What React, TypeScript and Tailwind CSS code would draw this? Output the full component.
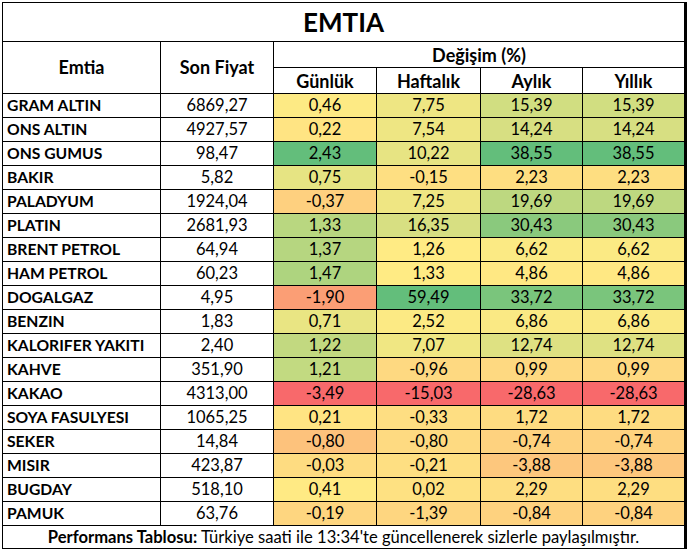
import React from "react";

type Row = { name: string; price: string; d: number[] };

const rows: Row[] = [
  { name: "GRAM ALTIN", price: "6869,27", d: [0.46, 7.75, 15.39, 15.39] },
  { name: "ONS ALTIN", price: "4927,57", d: [0.22, 7.54, 14.24, 14.24] },
  { name: "ONS GUMUS", price: "98,47", d: [2.43, 10.22, 38.55, 38.55] },
  { name: "BAKIR", price: "5,82", d: [0.75, -0.15, 2.23, 2.23] },
  { name: "PALADYUM", price: "1924,04", d: [-0.37, 7.25, 19.69, 19.69] },
  { name: "PLATIN", price: "2681,93", d: [1.33, 16.35, 30.43, 30.43] },
  { name: "BRENT PETROL", price: "64,94", d: [1.37, 1.26, 6.62, 6.62] },
  { name: "HAM PETROL", price: "60,23", d: [1.47, 1.33, 4.86, 4.86] },
  { name: "DOGALGAZ", price: "4,95", d: [-1.9, 59.49, 33.72, 33.72] },
  { name: "BENZIN", price: "1,83", d: [0.71, 2.52, 6.86, 6.86] },
  { name: "KALORIFER YAKITI", price: "2,40", d: [1.22, 7.07, 12.74, 12.74] },
  { name: "KAHVE", price: "351,90", d: [1.21, -0.96, 0.99, 0.99] },
  { name: "KAKAO", price: "4313,00", d: [-3.49, -15.03, -28.63, -28.63] },
  { name: "SOYA FASULYESI", price: "1065,25", d: [0.21, -0.33, 1.72, 1.72] },
  { name: "SEKER", price: "14,84", d: [-0.8, -0.8, -0.74, -0.74] },
  { name: "MISIR", price: "423,87", d: [-0.03, -0.21, -3.88, -3.88] },
  { name: "BUGDAY", price: "518,10", d: [0.41, 0.02, 2.29, 2.29] },
  { name: "PAMUK", price: "63,76", d: [-0.19, -1.39, -0.84, -0.84] },
];

const RED = [248, 105, 107];
const YEL = [255, 235, 132];
const GRN = [99, 190, 123];

function stats(col: number) {
  const v = rows.map((r) => r.d[col]).sort((a, b) => a - b);
  const n = v.length;
  const pos = (n - 1) * 0.5;
  const lo = Math.floor(pos);
  const mid = v[lo] + (v[Math.min(lo + 1, n - 1)] - v[lo]) * (pos - lo);
  return { min: v[0], max: v[n - 1], mid };
}

const colStats = [0, 1, 2, 3].map(stats);

function mix(a: number[], b: number[], t: number) {
  const c = a.map((x, i) => Math.round(x + (b[i] - x) * t));
  return `rgb(${c[0]},${c[1]},${c[2]})`;
}

function colorFor(val: number, col: number) {
  const { min, max, mid } = colStats[col];
  if (val <= mid) {
    const t = mid === min ? 1 : (val - min) / (mid - min);
    return mix(RED, YEL, Math.max(0, Math.min(1, t)));
  }
  const t = max === mid ? 1 : (val - mid) / (max - mid);
  return mix(YEL, GRN, Math.max(0, Math.min(1, t)));
}

function fmt(n: number) {
  return n.toFixed(2).replace(".", ",");
}

export default function App() {
  return (
    <div
      className="w-[687px] h-[552px] bg-white text-black"
      style={{ fontFamily: "Lato, 'Open Sans', sans-serif" }}
    >
      <div className="ml-[2px] pt-[2px]">
        <div className="grid w-[685px] grid-cols-[157px_112px_102px_103px_101px_101px] gap-px bg-black p-px">
          <div className="col-span-6 flex h-[38px] items-center justify-center bg-white text-[26px] font-bold leading-none">
            EMTIA
          </div>
          <div className="row-span-2 flex items-center justify-center bg-white text-[18px] font-bold">
            Emtia
          </div>
          <div className="row-span-2 flex items-center justify-center bg-white text-[18px] font-bold">
            Son Fiyat
          </div>
          <div className="col-span-4 flex h-[25px] items-center justify-center bg-white text-[18px] font-bold leading-none">
            Değişim (%)
          </div>
          <div className="flex h-[25px] items-center justify-center bg-white text-[18px] font-bold leading-none">
            Günlük
          </div>
          <div className="flex h-[25px] items-center justify-center bg-white text-[18px] font-bold leading-none">
            Haftalık
          </div>
          <div className="flex h-[25px] items-center justify-center bg-white text-[18px] font-bold leading-none">
            Aylık
          </div>
          <div className="flex h-[25px] items-center justify-center bg-white text-[18px] font-bold leading-none">
            Yıllık
          </div>
          {rows.map((r) => (
            <React.Fragment key={r.name}>
              <div className="flex h-[23px] items-center bg-white pl-[4px] text-[15.7px] font-bold leading-none">
                {r.name}
              </div>
              <div className="flex h-[23px] items-center justify-center bg-white text-[16.5px] leading-none">
                {r.price}
              </div>
              {r.d.map((v, i) => (
                <div
                  key={i}
                  className="flex h-[23px] items-center justify-center text-[16.5px] leading-none"
                  style={{ backgroundColor: colorFor(v, i) }}
                >
                  {fmt(v)}
                </div>
              ))}
            </React.Fragment>
          ))}
          <div className="col-span-6 flex h-[22px] items-center justify-center bg-white text-[16.6px] leading-none">
            <span className="font-bold">Performans Tablosu:</span>
            <span>&nbsp;Türkiye saati ile 13:34'te güncellenerek sizlerle paylaşılmıştır.</span>
          </div>
        </div>
      </div>
    </div>
  );
}
